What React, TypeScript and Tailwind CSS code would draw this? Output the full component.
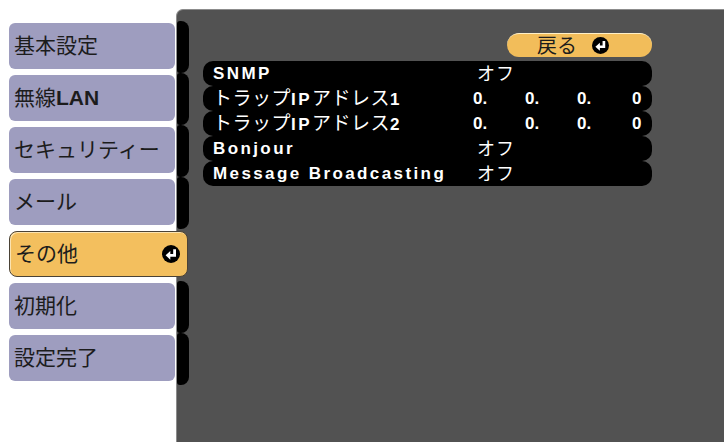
import React from "react";

function EnterIcon({ size = 18 }: { size?: number }) {
  return (
    <svg width={size} height={size} viewBox="0 0 16 16">
      <circle cx="8" cy="8" r="8" fill="#000" />
      <path d="M11.2 3.8 V9.2 H6.2" stroke="#fff" strokeWidth="2.5" fill="none" />
      <path d="M7.4 5.4 L3.2 9.2 L7.4 13 Z" fill="#fff" />
    </svg>
  );
}

const tabs: { label: React.ReactNode; selected?: boolean }[] = [
  { label: <>基本設定</> },
  { label: <>無線<b className="font-bold">LAN</b></> },
  { label: <>セキュリティー</> },
  { label: <>メール</> },
  { label: <>その他</>, selected: true },
  { label: <>初期化</> },
  { label: <>設定完了</> },
];

const Kana = ({ children }: { children: React.ReactNode }) => (
  <span className="font-normal text-[19px] tracking-[0.5px]">{children}</span>
);

const Lat = ({ children }: { children: React.ReactNode }) => (
  <span className="font-bold tracking-[2.4px]">{children}</span>
);

function Row({ label, value }: { label: React.ReactNode; value: React.ReactNode }) {
  return (
    <div className="h-[25px] rounded-[10px] bg-black flex items-center text-white text-[17px] pl-[10px] leading-none">
      <div className="w-[260px] shrink-0 whitespace-nowrap">{label}</div>
      <div className="flex-1 whitespace-nowrap">{value}</div>
    </div>
  );
}

const Off = () => <span className="pl-[4px] text-[18px] font-normal tracking-[1px]">オフ</span>;

const Ip = () => (
  <div className="flex font-bold">
    <span className="w-[52px]">0.</span>
    <span className="w-[52px]">0.</span>
    <span className="w-[55px]">0.</span>
    <span>0</span>
  </div>
);

export default function App() {
  return (
    <div className="w-[724px] h-[442px] bg-white flex overflow-hidden font-['Liberation_Sans','Noto_Sans_CJK_JP',sans-serif]">
      <div className="w-[176px] shrink-0 pt-[23px] pl-[9px] flex flex-col gap-[6px]">
        {tabs.map((t, i) =>
          t.selected ? (
            <div
              key={i}
              className="relative z-10 h-[46px] w-[179px] rounded-[8px] bg-[#f3bf5e] border border-[#4a4236] flex items-center justify-between pl-[5px] pr-[7px] text-[21px] text-[#1c1c1c] shadow-[inset_1px_1px_0_#fbe3b0]"
            >
              <span>{t.label}</span>
              <EnterIcon />
            </div>
          ) : (
            <div
              key={i}
              className="h-[46px] w-[166px] rounded-[6px] bg-[#9e9dbf] flex items-center pl-[5px] text-[21px] text-[#1c1c1c]"
            >
              {t.label}
            </div>
          )
        )}
      </div>
      <div className="flex-1 mt-[9px] h-[433px] bg-[#525252] rounded-tl-[7px] border-l border-t border-[#8c8c8c] flex">
        <div className="w-[12px] shrink-0 pt-[11px] flex flex-col">
          {tabs.map((t, i) =>
            t.selected ? (
              <div key={i} className="h-[52px]" />
            ) : (
              <div key={i} className="h-[52px] w-[12px] rounded-tl-[3px] rounded-bl-[3px] rounded-tr-[8px] rounded-br-[8px] bg-black" />
            )
          )}
        </div>
        <div className="ml-[14px] mt-[23px] w-[449px] flex flex-col">
          <div className="self-end w-[145px] h-[24px] rounded-full bg-[#f2bd5a] border-t border-[#fff0c8] flex items-center gap-[15px] pl-[30px] text-[20px] text-[#1c1c1c] leading-none">
            <span>戻る</span>
            <EnterIcon size={17} />
          </div>
          <div className="mt-[4px] flex flex-col">
            <Row label={<Lat>SNMP</Lat>} value={<Off />} />
            <Row
              label={
                <>
                  <Kana>トラップ</Kana>
                  <Lat>IP</Lat>
                  <Kana>アドレス</Kana>
                  <Lat>1</Lat>
                </>
              }
              value={<Ip />}
            />
            <Row
              label={
                <>
                  <Kana>トラップ</Kana>
                  <Lat>IP</Lat>
                  <Kana>アドレス</Kana>
                  <Lat>2</Lat>
                </>
              }
              value={<Ip />}
            />
            <Row label={<Lat>Bonjour</Lat>} value={<Off />} />
            <Row label={<Lat>Message Broadcasting</Lat>} value={<Off />} />
          </div>
        </div>
      </div>
    </div>
  );
}
